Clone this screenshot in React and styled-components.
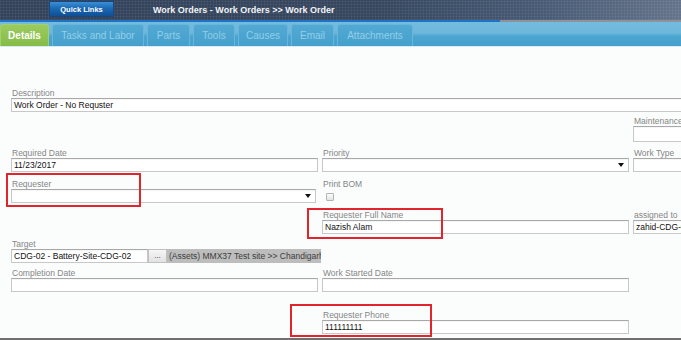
import React from "react";
import styled, { createGlobalStyle } from "styled-components";

const Global = createGlobalStyle`
  html, body { margin: 0; padding: 0; background: #ffffff; }
  * { box-sizing: border-box; }
`;

const FONT = `"Liberation Sans", Arial, sans-serif`;

const Page = styled.div`
  width: 681px;
  height: 340px;
  overflow: hidden;
  display: flex;
  flex-direction: column;
  font-family: ${FONT};
  background: #fbfdfd;
`;

const Header = styled.div`
  height: 20px;
  flex: 0 0 20px;
  display: flex;
  align-items: center;
  padding-left: 49px;
  gap: 39px;
  background:
    repeating-linear-gradient(0deg, rgba(255,255,255,0.05) 0 1px, transparent 1px 3px),
    repeating-linear-gradient(90deg, rgba(255,255,255,0.05) 0 1px, transparent 1px 3px),
    linear-gradient(to right, #33425a 0%, #35465e 55%, #465873 78%, #64738a 100%);
`;

const QuickLinks = styled.div`
  width: 65px;
  height: 16px;
  margin-top: -2px;
  display: flex;
  align-items: center;
  justify-content: center;
  color: #ffffff;
  font-size: 7.5px;
  font-weight: 700;
  border: 1px solid #17477c;
  border-radius: 1px;
  background: linear-gradient(#3a8fd6 0%, #1c69b5 45%, #0f4f95 100%);
`;

const Title = styled.div`
  color: #f2f4f7;
  font-size: 9px;
  font-weight: 700;
  margin-top: -1px;
`;

const Rule = styled.div`
  height: 2px;
  flex: 0 0 2px;
  background: linear-gradient(to right, #1f73c3 0 500px, #8c939c 500px);
`;

const TabBar = styled.div`
  height: 25px;
  flex: 0 0 25px;
  display: flex;
  align-items: flex-end;
  gap: 3px;
  padding-top: 2px;
  border-bottom: 1px solid #d6ebf5;
  background: linear-gradient(#74bcdf 0%, #6db7db 45%, #4ca5d0 60%, #45a0cd 100%);
`;

const Tab = styled.div`
  width: ${(p) => p.$w}px;
  height: 22px;
  display: flex;
  align-items: center;
  justify-content: center;
  font-size: 10px;
  white-space: nowrap;
  border-radius: 3px 3px 0 0;
  border: 1px solid ${(p) => (p.$active ? "#a4cf6e" : "#69b6dc")};
  border-bottom: none;
  color: ${(p) => (p.$active ? "#ffffff" : "#92cfea")};
  font-weight: ${(p) => (p.$active ? 700 : 400)};
  background: ${(p) =>
    p.$active
      ? "linear-gradient(#9bcb5f, #86bb48)"
      : "linear-gradient(#52a9d3, #45a0cc)"};
`;

const Body = styled.div`
  flex: 1;
  padding: 42px 0 0 11px;
  display: flex;
  flex-direction: column;
`;

const Row = styled.div`
  display: grid;
  grid-template-columns: 307px 307px 307px;
  column-gap: 4px;
  margin-top: ${(p) => p.$mt || 0}px;
`;

const Field = styled.div`
  position: relative;
  grid-column: ${(p) => p.$col || "auto"};
  display: flex;
  flex-direction: column;
`;

const Label = styled.div`
  height: 9px;
  line-height: 9px;
  font-size: 8.5px;
  color: #858585;
  padding-left: 1px;
  white-space: nowrap;
`;

const Input = styled.div`
  position: relative;
  width: ${(p) => (p.$w ? `${p.$w}px` : "100%")};
  height: ${(p) => p.$h || 14}px;
  background: #ffffff;
  border: 1px solid #c8c8c8;
  border-top-color: #a8a8a8;
  box-shadow: inset 0 1px 1px rgba(0, 0, 0, 0.04);
  font-size: 8.5px;
  color: #111111;
  padding-left: 2px;
  display: flex;
  align-items: center;
  white-space: nowrap;
  overflow: hidden;
  flex-shrink: 0;
`;

const Arrow = styled.span`
  position: absolute;
  right: 4px;
  top: 4px;
  width: 0;
  height: 0;
  border-left: 3px solid transparent;
  border-right: 3px solid transparent;
  border-top: 4px solid #111;
`;

const Check = styled.div`
  width: 8px;
  height: 8px;
  margin: 4px 0 0 4px;
  border: 1px solid #b3b3b3;
  border-radius: 1px;
  background: linear-gradient(#fbfbfb, #e4e4e4);
`;

const TargetLine = styled.div`
  display: flex;
  height: 14px;
`;

const Dots = styled.div`
  width: 19px;
  height: 14px;
  flex-shrink: 0;
  border: 1px solid #c0c0c0;
  background: linear-gradient(#f6f6f6, #e2e2e2);
  font-size: 8px;
  color: #333;
  display: flex;
  align-items: center;
  justify-content: center;
  padding-bottom: 2px;
`;

const Path = styled.div`
  width: 154px;
  flex-shrink: 0;
  height: 14px;
  background: #bdbdbd;
  color: #3c3c3c;
  font-size: 8.5px;
  padding-left: 2px;
  display: flex;
  align-items: center;
  white-space: nowrap;
  overflow: hidden;
`;

const Mark = styled.div`
  position: absolute;
  left: ${(p) => p.$x}px;
  top: ${(p) => p.$y}px;
  width: ${(p) => p.$w}px;
  height: ${(p) => p.$h}px;
  border: 2px solid #e2242d;
  pointer-events: none;
`;

const Footer = styled.div`
  height: 2px;
  flex: 0 0 2px;
  background: #707070;
`;

const tabs = [
  { t: "Details", w: 49, active: true },
  { t: "Tasks and Labor", w: 92 },
  { t: "Parts", w: 43 },
  { t: "Tools", w: 42 },
  { t: "Causes", w: 50 },
  { t: "Email", w: 43 },
  { t: "Attachments", w: 76 },
];

export default function App() {
  return (
    <>
      <Global />
      <Page>
        <Header>
          <QuickLinks>Quick Links</QuickLinks>
          <Title>Work Orders - Work Orders &gt;&gt; Work Order</Title>
        </Header>
        <Rule />
        <TabBar>
          {tabs.map((t) => (
            <Tab key={t.t} $w={t.w} $active={t.active}>
              {t.t}
            </Tab>
          ))}
        </TabBar>
        <Body>
          <Row>
            <Field $col="1 / -1">
              <Label>Description</Label>
              <Input>Work Order - No Requster</Input>
            </Field>
          </Row>
          <Row $mt={5}>
            <Field $col="3">
              <Label>Maintenance</Label>
              <Input $h={16} />
            </Field>
          </Row>
          <Row $mt={7}>
            <Field>
              <Label>Required Date</Label>
              <Input>11/23/2017</Input>
            </Field>
            <Field>
              <Label>Priority</Label>
              <Input>
                <Arrow />
              </Input>
            </Field>
            <Field>
              <Label>Work Type</Label>
              <Input />
            </Field>
          </Row>
          <Row $mt={8}>
            <Field>
              <Label>Requester</Label>
              <Input $w={305}>
                <Arrow />
              </Input>
              <Mark $x={-5} $y={-7} $w={135} $h={34} />
            </Field>
            <Field>
              <Label>Print BOM</Label>
              <Check />
            </Field>
          </Row>
          <Row $mt={8}>
            <Field $col="2">
              <Label>Requester Full Name</Label>
              <Input>Nazish Alam</Input>
              <Mark $x={-15} $y={-3} $w={136} $h={31} />
            </Field>
            <Field>
              <Label>assigned to</Label>
              <Input>zahid-CDG-02</Input>
            </Field>
          </Row>
          <Row $mt={6}>
            <Field>
              <Label>Target</Label>
              <TargetLine>
                <Input $w={137}>CDG-02 - Battery-Site-CDG-02</Input>
                <Dots>...</Dots>
                <Path>(Assets) MMX37 Test site &gt;&gt; Chandigarh</Path>
              </TargetLine>
            </Field>
          </Row>
          <Row $mt={6}>
            <Field>
              <Label>Completion Date</Label>
              <Input />
            </Field>
            <Field>
              <Label>Work Started Date</Label>
              <Input />
            </Field>
          </Row>
          <Row $mt={19}>
            <Field $col="2">
              <Label>Requester Phone</Label>
              <Input>111111111</Input>
              <Mark $x={-32} $y={-7} $w={142} $h={33} />
            </Field>
          </Row>
        </Body>
        <Footer />
      </Page>
    </>
  );
}
